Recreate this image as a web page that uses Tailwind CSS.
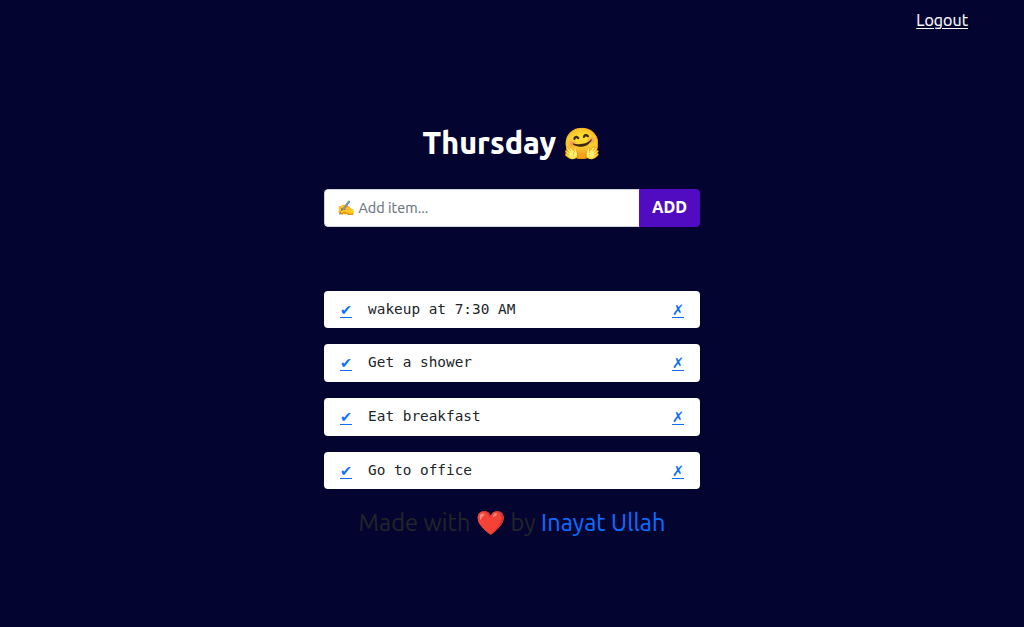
<!DOCTYPE html>
<html lang="en"><head><meta charset="utf-8"><title>Todo</title>
<script src="https://cdn.jsdelivr.net/npm/@tailwindcss/browser@4"></script></head>
<body class="h-screen overflow-hidden bg-[#03042f] font-[Ubuntu,'Open_Sans',sans-serif] text-[#212529]">
<header class="flex justify-end pr-14 pt-2"><a class="tracking-[0.05px] text-white underline underline-offset-2 [-webkit-text-stroke:0.15px]" href="#">Logout</a></header>
<main class="mx-auto mt-[92px] w-[376px]">
<h1 class="h-[38px] text-center text-[30.416px] leading-[38.5px] font-extrabold whitespace-nowrap text-white">Thursday 🤗</h1>
<form class="mt-[27px] flex h-[38px]">
<input class="min-w-0 flex-1 rounded-l border border-[#ced4da] bg-white px-3 pt-0.5 text-[14.4px] tracking-[0.04px] [-webkit-text-stroke:0.15px] placeholder:text-[#6c757d] placeholder:opacity-100" type="text" placeholder="✍️ Add item...">
<button class="-ml-px rounded-r border border-[#510bc0] bg-[#510bc0] px-3 pb-0.5 font-extrabold text-white" type="button">ADD</button>
</form>
<ul class="mt-[63.9px] flex flex-col gap-4 font-['DejaVu_Sans_Mono'] text-[14.4px] leading-[21.6px]">
<li class="flex rounded bg-white px-4 py-2"><a class="-mb-px pt-px font-['DejaVu_Sans'] text-[#0d6efd] underline underline-offset-2" href="#">✔</a><span class="ml-4 flex-1">wakeup at 7:30 AM</span><a class="-mb-px pt-px font-['DejaVu_Sans'] text-[#0d6efd] underline underline-offset-2" href="#">✗</a></li>
<li class="flex rounded bg-white px-4 py-2"><a class="-mb-px pt-px font-['DejaVu_Sans'] text-[#0d6efd] underline underline-offset-2" href="#">✔</a><span class="ml-4 flex-1">Get a shower</span><a class="-mb-px pt-px font-['DejaVu_Sans'] text-[#0d6efd] underline underline-offset-2" href="#">✗</a></li>
<li class="flex rounded bg-white px-4 py-2"><a class="-mb-px pt-px font-['DejaVu_Sans'] text-[#0d6efd] underline underline-offset-2" href="#">✔</a><span class="ml-4 flex-1">Eat breakfast</span><a class="-mb-px pt-px font-['DejaVu_Sans'] text-[#0d6efd] underline underline-offset-2" href="#">✗</a></li>
<li class="flex rounded bg-white px-4 py-2"><a class="-mb-px pt-px font-['DejaVu_Sans'] text-[#0d6efd] underline underline-offset-2" href="#">✔</a><span class="ml-4 flex-1">Go to office</span><a class="-mb-px pt-px font-['DejaVu_Sans'] text-[#0d6efd] underline underline-offset-2" href="#">✗</a></li>
</ul>
<footer class="mt-[18.7px] text-center text-[23.47px] leading-[28px] tracking-[0.09px] [-webkit-text-stroke:0.15px]">Made with ❤️ by <a class="text-[#0d6efd]" href="#">Inayat Ullah</a></footer>
</main>
</body></html>
